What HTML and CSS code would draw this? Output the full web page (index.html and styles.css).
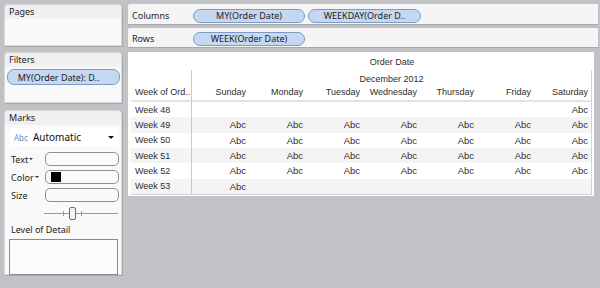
FILE: index.html
```html
<!DOCTYPE html>
<html>
<head>
<meta charset="utf-8">
<link rel="stylesheet" href="styles.css">
</head>
<body>
<div class="app">
  <div class="side">
    <section class="panel pages"><div class="ph">Pages</div></section>
    <section class="panel filters">
      <div class="ph">Filters</div>
      <div class="pill fpill">MY(Order Date): D..</div>
    </section>
    <section class="panel marks">
      <div class="ph">Marks</div>
      <div class="dd"><span class="abc">Abc</span><span class="auto">Automatic</span><span class="caret"></span></div>
      <div class="mrow"><span class="ml">Text<i class="tri"></i></span><span class="field"></span></div>
      <div class="mrow"><span class="ml">Color<i class="tri"></i></span><span class="field"><span class="swatch"></span></span></div>
      <div class="mrow"><span class="ml">Size</span><span class="field"></span></div>
      <div class="slider">
        <svg width="74" height="13" viewBox="0 0 74 13">
          <line x1="0" y1="6.5" x2="74" y2="6.5" stroke="#9a9a9a" stroke-width="1"/>
          <line x1="19.5" y1="4" x2="19.5" y2="9" stroke="#9a9a9a" stroke-width="1"/>
          <line x1="37.5" y1="4" x2="37.5" y2="9" stroke="#9a9a9a" stroke-width="1"/>
          <rect x="25.5" y="0.5" width="6" height="12" rx="1.5" fill="#f4f4f4" stroke="#6e6e6e"/>
        </svg>
      </div>
      <div class="lodl">Level of Detail</div>
      <div class="lod"></div>
    </section>
  </div>
  <div class="main">
    <div class="shelf cols"><span class="sl">Columns</span><span class="pill sp p1">MY(Order Date)</span><span class="pill sp p2">WEEKDAY(Order D..</span></div>
    <div class="shelf rws"><span class="sl">Rows</span><span class="pill sp p1">WEEK(Order Date)</span></div>
    <div class="view">
      <div class="vtitle">Order Date</div>
      <div class="tbl">
        <div class="rh">Week of Ord..</div>
        <div class="month">December 2012</div>
        <div class="dh">Sunday</div><div class="dh">Monday</div><div class="dh">Tuesday</div><div class="dh">Wednesday</div><div class="dh">Thursday</div><div class="dh">Friday</div><div class="dh">Saturday</div>

        <div class="wk">Week 48</div><div class="c"></div><div class="c"></div><div class="c"></div><div class="c"></div><div class="c"></div><div class="c"></div><div class="c">Abc</div>
        <div class="wk alt">Week 49</div><div class="c alt">Abc</div><div class="c alt">Abc</div><div class="c alt">Abc</div><div class="c alt">Abc</div><div class="c alt">Abc</div><div class="c alt">Abc</div><div class="c alt">Abc</div>
        <div class="wk">Week 50</div><div class="c">Abc</div><div class="c">Abc</div><div class="c">Abc</div><div class="c">Abc</div><div class="c">Abc</div><div class="c">Abc</div><div class="c">Abc</div>
        <div class="wk alt">Week 51</div><div class="c alt">Abc</div><div class="c alt">Abc</div><div class="c alt">Abc</div><div class="c alt">Abc</div><div class="c alt">Abc</div><div class="c alt">Abc</div><div class="c alt">Abc</div>
        <div class="wk">Week 52</div><div class="c">Abc</div><div class="c">Abc</div><div class="c">Abc</div><div class="c">Abc</div><div class="c">Abc</div><div class="c">Abc</div><div class="c">Abc</div>
        <div class="wk alt">Week 53</div><div class="c alt">Abc</div><div class="c alt"></div><div class="c alt"></div><div class="c alt"></div><div class="c alt"></div><div class="c alt"></div><div class="c alt"></div>
      </div>
    </div>
  </div>
</div>
</body>
</html>
```

FILE: styles.css
```css
* { box-sizing: border-box; }
html, body { margin: 0; padding: 0; }
body {
  width: 600px;
  height: 288px;
  overflow: hidden;
  background: #c1c2c6;
  font-family: "Noto Sans", "DejaVu Sans", sans-serif;
  font-size: 9px;
  color: #2b2b2b;
}
.app {
  display: flex;
  gap: 6px;
  padding: 4px 3px 0 4px;
}
.side {
  width: 118px;
  display: flex;
  flex-direction: column;
  flex-shrink: 0;
}
.panel {
  background: #f9f9f9;
  border: 1px solid #d9d9d9;
  border-radius: 4px 4px 0 0;
  box-shadow: 1px 1px 0 #a8a9ad;
}
.ph {
  height: 14px;
  line-height: 13px;
  padding-left: 4px;
  background: #f0f0f0;
  border-radius: 4px 4px 0 0;
  color: #222;
}
.pages { height: 42px; }
.filters { height: 51px; margin-top: 6px; }
.marks { height: 165px; margin-top: 7px; }

.pill {
  display: flex;
  align-items: center;
  justify-content: center;
  background: #c6d8f1;
  border: 1px solid #7b9cc4;
  border-radius: 7px;
  color: #222;
  white-space: nowrap;
  line-height: 1;
  flex-shrink: 0;
}
.fpill {
  margin: 2px 1px 0 2px;
  height: 16px;
  font-size: 9px;
  padding-right: 10px;
}

.dd {
  margin: 3px 3px 0 5px;
  height: 18px;
  background: #ffffff;
  display: flex;
  align-items: center;
  padding-left: 4px;
}
.abc { color: #6f8fbf; font-size: 8px; margin-right: 5px; }
.auto { color: #111; flex: 1; font-size: 10px; }
.caret {
  width: 0; height: 0;
  border-left: 3px solid transparent;
  border-right: 3px solid transparent;
  border-top: 3px solid #111;
  margin-right: 4px;
}
.mrow {
  display: flex;
  align-items: center;
  height: 14px;
  margin-top: 4px;
  padding-left: 6px;
}
.dd + .mrow { margin-top: 6px; }
.ml {
  width: 34px;
  display: flex;
  align-items: center;
  color: #222;
}
.tri {
  display: inline-block;
  width: 0; height: 0;
  border-left: 2px solid transparent;
  border-right: 2px solid transparent;
  border-top: 2px solid #333;
  margin-left: 1px;
}
.field {
  flex: 0 0 74px;
  height: 14px;
  border: 1px solid #8e8e8e;
  border-radius: 5px;
  background: #fafafa;
  display: flex;
  align-items: center;
  padding-left: 5px;
}
.swatch { width: 10px; height: 10px; background: #000; }
.slider {
  margin: 5px 0 0 39px;
  height: 13px;
  display: flex;
}
.lodl {
  margin-top: 4px;
  padding-left: 6px;
  line-height: 12px;
  color: #222;
}
.lod {
  margin: 3px 3px 0 4px;
  height: 36px;
  border: 1px solid #8a8a8a;
  background: #fbfbfb;
}

.main {
  flex: 1;
  display: flex;
  flex-direction: column;
}
.shelf {
  display: flex;
  align-items: center;
  gap: 3px;
  background: #f5f5f5;
  border-radius: 2px 0 0 0;
  box-shadow: 0 1px 0 #a8a9ad;
}
.cols { height: 20px; padding-top: 3px; }
.rws { height: 19px; margin-top: 4px; padding-top: 2px; }
.sl { width: 62px; padding-left: 4px; color: #222; flex-shrink: 0; }
.sp { height: 14px; font-size: 9px; }
.p1 { width: 112px; }
.p2 { width: 113px; }

.view {
  margin-top: 5px;
  margin-right: 4px;
  height: 144px;
  background: #ffffff;
  padding: 0 2px 0 3px;
  font-family: "Liberation Sans", Arial, sans-serif;
  color: #2e2e2e;
}
.vtitle {
  height: 18px;
  line-height: 1;
  padding: 6px 0 0 61px;
  text-align: center;
}
.tbl {
  display: grid;
  grid-template-columns: 61px repeat(7, 57px);
  grid-template-rows: 17px 15px repeat(6, 1fr);
  height: 125px;
  border-right: 1px solid #d2d2d2;
  border-bottom: 1px solid #d2d2d2;
}
.rh {
  grid-row: 1 / span 2;
  grid-column: 1;
  display: flex;
  align-items: flex-end;
  padding: 0 0 3px 4px;
  border-right: 1px solid #c9c9c9;
  border-bottom: 2px solid #e2e2e2;
  white-space: nowrap;
}
.month {
  grid-column: 2 / span 7;
  display: flex;
  justify-content: center;
  align-items: center;
  padding-top: 1px;
}
.dh {
  display: flex;
  justify-content: flex-end;
  align-items: flex-end;
  padding: 0 3px 3px 0;
  border-bottom: 2px solid #e2e2e2;
}
.wk {
  display: flex;
  align-items: center;
  padding-left: 4px;
  border-right: 1px solid #c9c9c9;
}
.c {
  display: flex;
  align-items: center;
  justify-content: flex-end;
  padding-right: 3px;
  font-size: 9.5px;
}
.alt { background: #f4f4f4; }
```
